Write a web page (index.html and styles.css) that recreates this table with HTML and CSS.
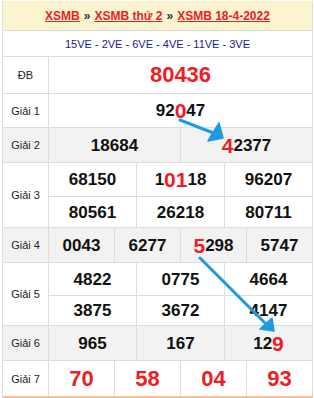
FILE: index.html
```html
<!DOCTYPE html>
<html lang="vi">
<head>
<meta charset="utf-8">
<title>XSMB 18-4-2022</title>
<link rel="stylesheet" href="styles.css">
</head>
<body>
<div class="page">
  <div class="board">
    <div class="head">
      <a href="#">XSMB</a> <span class="sep">»</span> <a href="#">XSMB thứ 2</a> <span class="sep">»</span> <a href="#">XSMB 18-4-2022</a>
    </div>
    <div class="ve">15VE - 2VE - 6VE - 4VE - 11VE - 3VE</div>

    <div class="row h36">
      <div class="label">ĐB</div>
      <div class="cells c1"><div class="cell special">80436</div></div>
    </div>

    <div class="row h33">
      <div class="label">Giải 1</div>
      <div class="cells c1"><div class="cell">92<span class="hl">0</span>47</div></div>
    </div>

    <div class="row h34 alt">
      <div class="label">Giải 2</div>
      <div class="cells c2">
        <div class="cell">18684</div>
        <div class="cell"><span class="hl">4</span>2377</div>
      </div>
    </div>

    <div class="row alt-none">
      <div class="label">Giải 3</div>
      <div class="cells c3 g3">
        <div class="cell">68150</div>
        <div class="cell">1<span class="hl">01</span>18</div>
        <div class="cell">96207</div>
        <div class="cell">80561</div>
        <div class="cell">26218</div>
        <div class="cell">80711</div>
      </div>
    </div>

    <div class="row h34 alt">
      <div class="label">Giải 4</div>
      <div class="cells c4">
        <div class="cell">0043</div>
        <div class="cell">6277</div>
        <div class="cell"><span class="hl">5</span>298</div>
        <div class="cell">5747</div>
      </div>
    </div>

    <div class="row">
      <div class="label">Giải 5</div>
      <div class="cells c3 g5">
        <div class="cell">4822</div>
        <div class="cell">0775</div>
        <div class="cell">4664</div>
        <div class="cell">3875</div>
        <div class="cell">3672</div>
        <div class="cell">4147</div>
      </div>
    </div>

    <div class="row h34 alt">
      <div class="label">Giải 6</div>
      <div class="cells c3">
        <div class="cell">965</div>
        <div class="cell">167</div>
        <div class="cell">12<span class="hl">9</span></div>
      </div>
    </div>

    <div class="row h35">
      <div class="label">Giải 7</div>
      <div class="cells c4">
        <div class="cell big">70</div>
        <div class="cell big">58</div>
        <div class="cell big">04</div>
        <div class="cell big">93</div>
      </div>
    </div>
  </div>

  <svg class="arrows" viewBox="0 0 314 398" width="314" height="398" aria-hidden="true">
    <line x1="180" y1="120" x2="216" y2="134" />
    <polygon points="219,123 223,138 208,141" />
    <line x1="200" y1="258" x2="267" y2="325" />
    <polygon points="272,318 274,331 260,329" />
  </svg>
</div>
</body>
</html>
```

FILE: styles.css
```css
* { box-sizing: border-box; }

body {
  margin: 0;
  background: #fff;
  font-family: "Liberation Sans", Arial, sans-serif;
  color: #000;
}

.page {
  position: relative;
  width: 314px;
  height: 398px;
  overflow: hidden;
}

.board {
  margin: 1px 1px 0 2px;
  border-left: 1px solid #ddd;
  border-right: 1px solid #ddd;
  border-bottom: 2px solid #f8c08c;
}

.head {
  height: 29px;
  background: #fcf3cf;
  display: flex;
  align-items: center;
  justify-content: center;
  gap: 4px;
  font-size: 12px;
  font-weight: bold;
  white-space: nowrap;
}

.head a {
  color: #ee1c25;
  text-decoration: underline;
}

.head .sep {
  color: #333;
}

.ve {
  height: 26px;
  border-top: 1px solid #ddd;
  display: flex;
  align-items: center;
  justify-content: center;
  font-size: 11px;
  color: #1a1a8c;
}

.row {
  display: flex;
  border-top: 1px solid #ddd;
}

.h33 { height: 34px; }
.h34 { height: 35px; }
.h35 { height: 36px; }
.h36 { height: 37px; }

.label {
  flex: 0 0 46px;
  border-right: 1px solid #ddd;
  display: flex;
  align-items: center;
  justify-content: center;
  font-size: 11px;
  color: #222;
  background: #fff;
}

.cells {
  flex: 1;
  display: grid;
  gap: 1px;
  background: #ddd;
}

.c1 { grid-template-columns: 1fr; }
.c2 { grid-template-columns: 1fr 1fr; }
.c3 { grid-template-columns: 1fr 1fr 1fr; }
.c4 { grid-template-columns: 1fr 1fr 1fr 1fr; }

.g3 { grid-template-rows: 33px 30px; }
.g5 { grid-template-rows: 32px 29px; }

.cell {
  background: #fff;
  display: flex;
  align-items: center;
  justify-content: center;
  font-size: 17px;
  font-weight: bold;
  line-height: 1;
  color: #111;
  white-space: nowrap;
}

.alt .label,
.alt .cell {
  background: #f2f2f2;
}

.hl {
  color: #ee1c25;
  font-size: 21px;
}

.special,
.big {
  color: #ee1c25;
  font-size: 22px;
}

.arrows {
  position: absolute;
  left: 0;
  top: 0;
  pointer-events: none;
}

.arrows line {
  stroke: #1e9be0;
  stroke-width: 3;
  stroke-linecap: round;
}

.arrows polygon {
  fill: #1e9be0;
  stroke: #1e9be0;
  stroke-width: 1.5;
  stroke-linejoin: round;
}
```
